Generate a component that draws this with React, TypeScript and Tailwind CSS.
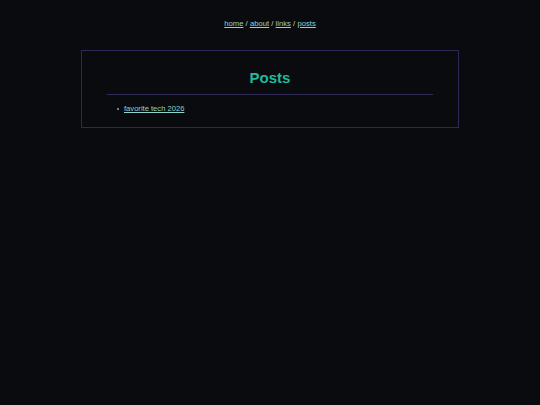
import React from "react";

export default function App() {
  return (
    <div
      className="min-h-[405px] w-full bg-[#090b0f] text-[#c9d1d9]"
      style={{ fontFamily: '"Liberation Sans", Arial, sans-serif' }}
    >
      <nav className="pt-[19px] text-center text-[7.7px] leading-[10px] text-[#c9d1d9]">
        <a href="#" className="text-[#8fd3cb] underline decoration-[#8fd3cb]">home</a>
        {" / "}
        <a href="#" className="text-[#8fd3cb] underline decoration-[#8fd3cb]">about</a>
        {" / "}
        <a href="#" className="text-[#8fd3cb] underline decoration-[#8fd3cb]">links</a>
        {" / "}
        <a href="#" className="text-[#8fd3cb] underline decoration-[#8fd3cb]">posts</a>
      </nav>
      <main className="mx-auto mt-[21px] w-[378px] border border-[#2d2858] px-[25px] pb-[13px]">
        <h1 className="mt-[18px] text-center text-[15px] font-bold leading-[18px] text-[#23b99c]">
          Posts
        </h1>
        <div className="mt-[7px] h-px bg-[#2f2a5a]" />
        <ul className="mt-[9px] pl-[10px] text-[7.6px] leading-[10px] text-[#9aa3b8]">
          <li className="flex items-center gap-[5px]">
            <span className="h-[2px] w-[2px] rounded-full bg-[#9aa3b8]" />
            <a href="#" className="text-[#8fd3cb] underline decoration-[#8fd3cb]">favorite tech 2026</a>
          </li>
        </ul>
      </main>
    </div>
  );
}
